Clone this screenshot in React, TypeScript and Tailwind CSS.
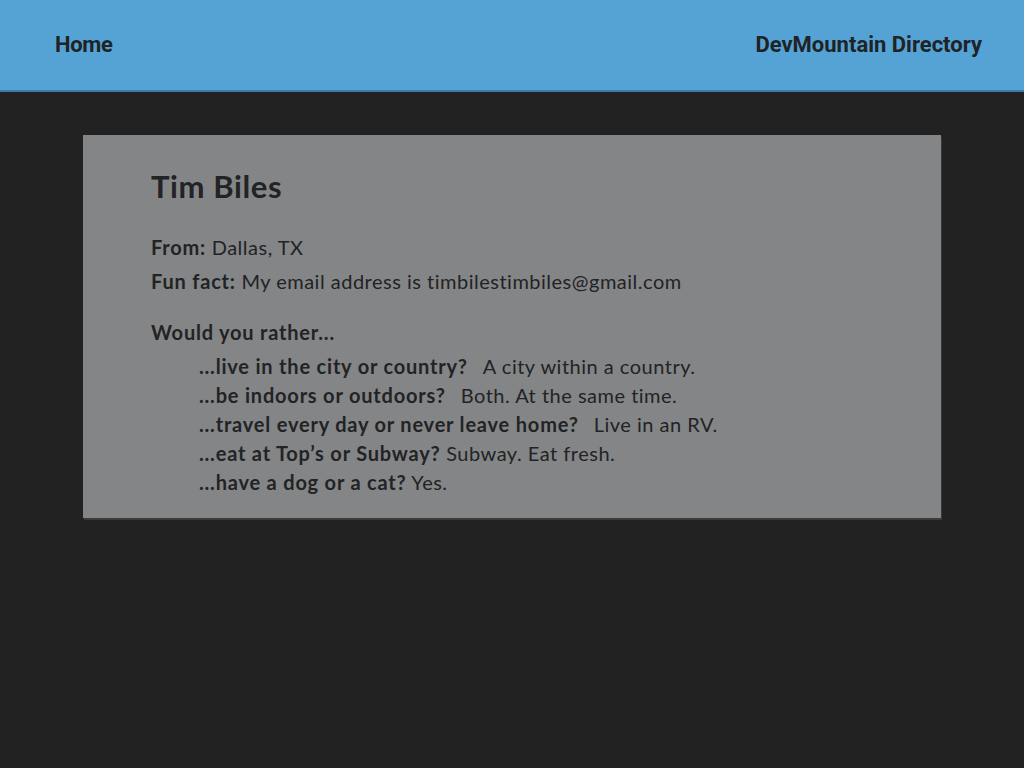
const answers = [
  { q: "...live in the city or country?", a: "A city within a country.", gap: true },
  { q: "...be indoors or outdoors?", a: "Both. At the same time.", gap: true },
  { q: "...travel every day or never leave home?", a: "Live in an RV.", gap: true },
  { q: "...eat at Top’s or Subway?", a: "Subway. Eat fresh.", gap: false },
  { q: "...have a dog or a cat?", a: "Yes.", gap: false },
];

export default function App() {
  return (
    <div className="min-h-[768px] bg-[#222222] font-['Lato','Noto_Sans',sans-serif] text-[#222324]">
      {/* Header */}
      <header className="flex h-[92px] items-center justify-between border-b-2 border-[#3e7ca5] bg-[#55a3d5] pb-[2px] pl-[55px] pr-[42px]">
        <a className="font-['Roboto',sans-serif] text-[22px] font-bold tracking-[-0.3px] text-[#1f2326]">
          Home
        </a>
        <span className="font-['Roboto',sans-serif] text-[22px] font-bold tracking-[0px] text-[#1f2326]">
          DevMountain Directory
        </span>
      </header>

      {/* Card */}
      <div className="px-[83px] pt-[43px]">
        <div className="bg-[#848587] pb-[21px] pl-[68px] pr-[20px] pt-[28px] tracking-[0.5px] shadow-[1px_2px_0_#3a3a3b]">
          <h1 className="text-[31px] font-bold leading-[46px] tracking-[0.6px]">Tim Biles</h1>
          <div className="mt-[21px] text-[20px] leading-[34px]">
            <p>
              <span className="font-bold tracking-[0.8px]">From:</span> Dallas, TX
            </p>
            <p>
              <span className="font-bold tracking-[0.8px]">Fun fact:</span> My email address is timbilestimbiles@gmail.com
            </p>
          </div>
          <p className="mt-[17px] text-[20px] font-bold leading-[34px] tracking-[0.8px]">Would you rather...</p>
          <ul className="mt-[3px] pl-[48px] text-[20px] leading-[29px]">
            {answers.map((r) => (
              <li key={r.q}>
                <span className="font-bold tracking-[0.8px]">{r.q}</span>
                {r.gap ? <span className="inline-block w-[15px]" /> : " "}
                {r.a}
              </li>
            ))}
          </ul>
        </div>
      </div>
    </div>
  );
}
